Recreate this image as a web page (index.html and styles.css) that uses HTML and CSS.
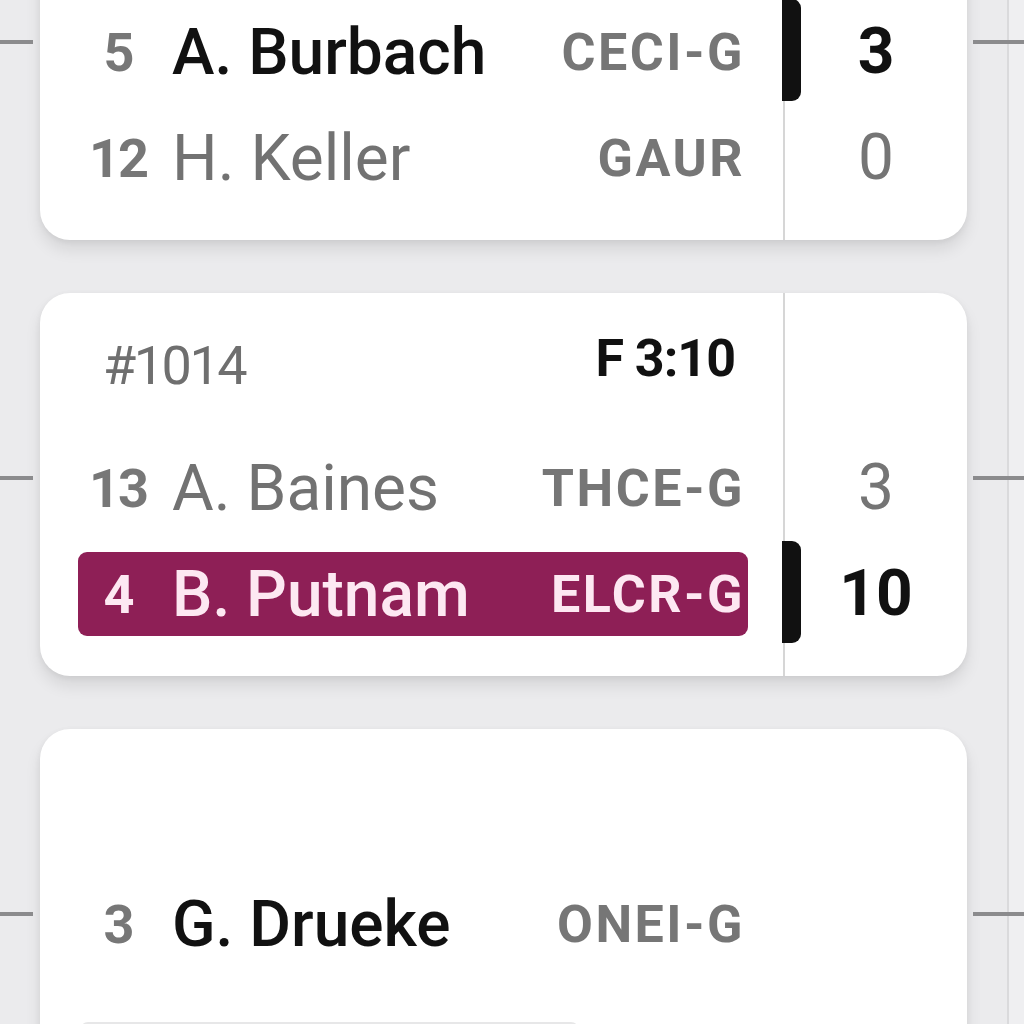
FILE: index.html
```html
<!DOCTYPE html>
<html lang="en">
<head>
<meta charset="utf-8">
<title>Bracket</title>
<link rel="stylesheet" href="styles.css">
</head>
<body>
<div class="page">
  <div class="round">
    <div class="card">
      <span class="conn conn-left"></span>
      <span class="conn conn-right"></span>
      <div class="main">
        <div class="head"></div>
        <div class="row"><span class="seed">5</span><span class="name win">A. Burbach</span><span class="code">CECI-G</span></div>
        <div class="row"><span class="seed">12</span><span class="name">H. Keller</span><span class="code">GAUR</span></div>
      </div>
      <div class="scores">
        <div class="head"></div>
        <div class="score win"><span class="bar"></span>3</div>
        <div class="score">0</div>
      </div>
    </div>

    <div class="card">
      <span class="conn conn-left"></span>
      <span class="conn conn-right"></span>
      <div class="main">
        <div class="head"><span class="match">#1014</span><span class="time">F 3:10</span></div>
        <div class="row"><span class="seed">13</span><span class="name">A. Baines</span><span class="code">THCE-G</span></div>
        <div class="row sel"><span class="seed">4</span><span class="name">B. Putnam</span><span class="code">ELCR-G</span></div>
      </div>
      <div class="scores">
        <div class="head"></div>
        <div class="score">3</div>
        <div class="score win"><span class="bar"></span>10</div>
      </div>
    </div>

    <div class="card">
      <span class="conn conn-left"></span>
      <span class="conn conn-right"></span>
      <div class="main">
        <div class="head"></div>
        <div class="row"><span class="seed">3</span><span class="name win">G. Drueke</span><span class="code">ONEI-G</span></div>
        <div class="row"><span class="skel"></span></div>
      </div>
      <div class="scores pending">
        <div class="head"></div>
        <div class="score"></div>
        <div class="score"></div>
      </div>
    </div>
  </div>
  <div class="next-round"></div>
</div>
</body>
</html>
```

FILE: styles.css
```css
html, body {
  margin: 0;
  padding: 0;
  height: 100%;
  overflow: hidden;
}

body {
  background: #ebebed;
  font-family: Roboto, "Liberation Sans", sans-serif;
  color: #111;
}

.page {
  display: flex;
  height: 1024px;
}

.round {
  width: 1007px;
  padding-left: 40px;
  box-sizing: border-box;
  margin-top: -143px;
  display: flex;
  flex-direction: column;
  gap: 53px;
}

.next-round {
  flex: 1;
  border-left: 2px solid #dadadc;
  background: #efeff1;
}

.card {
  position: relative;
  width: 927px;
  background: #fff;
  border-radius: 30px;
  display: flex;
  box-shadow: 0 10px 16px rgba(0, 0, 0, 0.09), 0 2px 6px rgba(0, 0, 0, 0.06);
}

.conn {
  position: absolute;
  top: 183px;
  height: 4px;
  background: #8b8b8d;
  z-index: 2;
}
.conn-left { left: -40px; width: 33px; }
.conn-right { left: 933px; width: 60px; }

.main {
  width: 743px;
  box-sizing: border-box;
  padding: 46px 35px 40px 38px;
  display: flex;
  flex-direction: column;
  gap: 22px;
}

.scores {
  flex: 1;
  border-left: 2px solid #d6d6d6;
  padding: 46px 0 40px;
  display: flex;
  flex-direction: column;
  gap: 22px;
}
.scores.pending { border-left-color: transparent; }

.head {
  height: 85px;
  display: flex;
  align-items: flex-start;
  justify-content: space-between;
  padding: 0 13px 0 25px;
}

.match {
  font-size: 54px;
  line-height: 54px;
  color: #6f6f6f;
  letter-spacing: -2.5px;
}

.time {
  font-size: 52px;
  line-height: 52px;
  font-weight: 700;
  color: #111;
  margin-top: -6px;
  letter-spacing: -1px;
}

.row {
  height: 84px;
  display: flex;
  align-items: center;
  border-radius: 9px;
  padding-right: 3px;
}

.seed {
  width: 80px;
  text-align: center;
  font-size: 54px;
  font-weight: 700;
  color: #777;
  letter-spacing: -2px;
}

.name {
  margin-left: 14px;
  font-size: 64px;
  color: #727272;
}
.name.win {
  color: #111;
  font-weight: 500;
}

.code {
  margin-left: auto;
  font-size: 52px;
  font-weight: 700;
  color: #767676;
  letter-spacing: 2.5px;
}

.row.sel {
  background: #8e1f56;
}
.row.sel .seed,
.row.sel .name,
.row.sel .code {
  color: #fde8f2;
}
.row.sel .name { font-weight: 500; }

.skel {
  width: 499px;
  height: 20px;
  margin: 34px 0 0 2px;
  align-self: flex-start;
  border-radius: 8px;
  background: #e7e7e8;
}

.score {
  position: relative;
  height: 84px;
  line-height: 84px;
  text-align: center;
  font-size: 64px;
  color: #757575;
}
.score.win {
  color: #111;
  font-weight: 700;
}

.bar {
  position: absolute;
  left: -3px;
  top: -11px;
  width: 19px;
  height: 102px;
  background: #111;
  border-radius: 0 9px 9px 0;
}
```
